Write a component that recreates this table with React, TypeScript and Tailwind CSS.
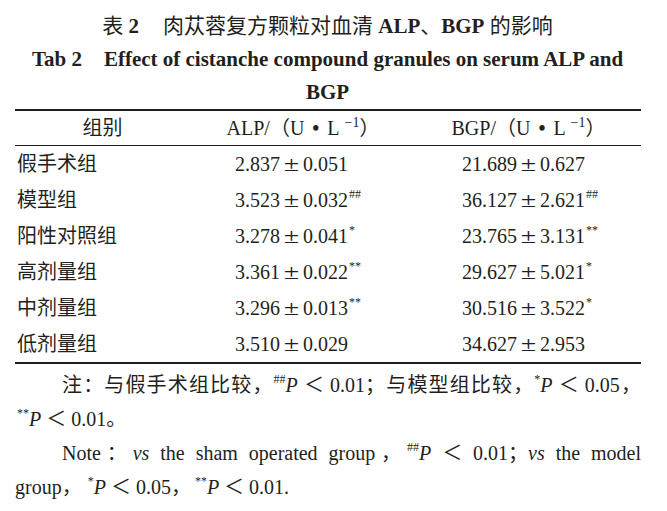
import React from 'react';

const rows = [
  { name: '假手术组', a: '2.837', ae: '0.051', am: '', b: '21.689', be: '0.627', bm: '' },
  { name: '模型组', a: '3.523', ae: '0.032', am: '##', b: '36.127', be: '2.621', bm: '##' },
  { name: '阳性对照组', a: '3.278', ae: '0.041', am: '*', b: '23.765', be: '3.131', bm: '**' },
  { name: '高剂量组', a: '3.361', ae: '0.022', am: '**', b: '29.627', be: '5.021', bm: '*' },
  { name: '中剂量组', a: '3.296', ae: '0.013', am: '**', b: '30.516', be: '3.522', bm: '*' },
  { name: '低剂量组', a: '3.510', ae: '0.029', am: '', b: '34.627', be: '2.953', bm: '' },
];

// small raised marks: ##, *, **
const Sup = ({ children, className = '' }: { children: React.ReactNode; className?: string }) => (
  <span className={`relative -top-[9px] text-[12px] leading-none ${className}`}>{children}</span>
);

const Value = ({ v, e, m }: { v: string; e: string; m: string }) => (
  <span>
    {v}
    <span className="inline-block mx-[6px] scale-x-[1.4]">±</span>
    {e}
    {m && <Sup className="ml-[1px]">{m}</Sup>}
  </span>
);

const Unit = ({ label }: { label: string }) => (
  <span>
    {label}/（U<span className="mx-[8px] font-bold">•</span>L
    <span className="relative -top-[8px] ml-[5px] text-[14px] leading-none">−1</span>）
  </span>
);

const P = () => <span className="italic">P</span>;

export default function App() {
  return (
    <div
      className="w-[667px] h-[511px] bg-white text-[#231f20] overflow-hidden"
      style={{ fontFamily: '"Liberation Serif", "Noto Sans CJK SC", serif' }}
    >
      <div className="pt-[10px] pr-[12px] text-center leading-[33px]">
        <div className="text-[21px]">
          表 <span className="font-bold">2</span>
          <span className="ml-[24px]">肉苁蓉复方颗粒对血清 </span>
          <span className="font-bold">ALP</span>、<span className="font-bold">BGP</span> 的影响
        </div>
        <div className="font-bold text-[21px]">
          Tab 2<span className="ml-[22px]">Effect of cistanche compound granules on serum ALP and</span>
        </div>
        <div className="font-bold text-[21px]">BGP</div>
      </div>

      <div className="mx-[15px] w-[626px] border-t-2 border-b-2 border-[#231f20] text-[20px]">
        <div className="grid grid-cols-[175px_226px_225px] h-[35px] items-center border-b border-[#231f20]">
          <div className="text-center">组别</div>
          <div className="text-center">
            <Unit label="ALP" />
          </div>
          <div className="text-center">
            <Unit label="BGP" />
          </div>
        </div>
        {rows.map((r) => (
          <div key={r.name} className="grid grid-cols-[175px_226px_225px] h-[36px] items-center">
            <div className="pl-[2px]">{r.name}</div>
            <div className="pl-[45px]">
              <Value v={r.a} e={r.ae} m={r.am} />
            </div>
            <div className="pl-[46px]">
              <Value v={r.b} e={r.be} m={r.bm} />
            </div>
          </div>
        ))}
      </div>

      <div className="mt-[4px] mx-[15px] w-[626px] text-[20px] leading-[34px]">
        <div className="pl-[47px] text-justify [text-align-last:justify]">
          注：与假手术组比较，<Sup>##</Sup><P /> ＜ 0.01；与模型组比较，<Sup>*</Sup><P /> ＜ 0.05，
        </div>
        <div>
          <Sup className="ml-[2px]">**</Sup><P /> ＜ 0.01。
        </div>
        <div className="pl-[47px] text-justify [text-align-last:justify]">
          Note：<span className="italic">vs</span> the sham operated group，<Sup>##</Sup><P /> ＜ 0.01；
          <span className="italic">vs</span> the model
        </div>
        <div>
          group，<Sup className="ml-[6px]">*</Sup><P /> ＜ 0.05，<Sup className="ml-[4px]">**</Sup><P /> ＜ 0.01.
        </div>
      </div>
    </div>
  );
}
